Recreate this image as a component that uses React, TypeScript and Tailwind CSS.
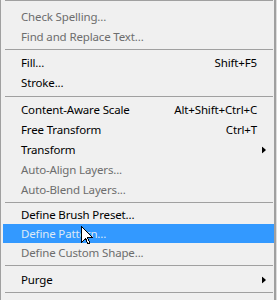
import React from "react"

type Item =
  | { kind: "sep"; h: number }
  | { kind: "item"; label: string; h: number; shortcut?: string; disabled?: boolean; submenu?: boolean; active?: boolean }

const items: Item[] = [
  { kind: "item", h: 20, label: "Check Spelling...", disabled: true },
  { kind: "item", h: 19, label: "Find and Replace Text...", disabled: true },
  { kind: "sep", h: 7 },
  { kind: "item", h: 20, label: "Fill...", shortcut: "Shift+F5" },
  { kind: "item", h: 20, label: "Stroke..." },
  { kind: "sep", h: 7 },
  { kind: "item", h: 20, label: "Content-Aware Scale", shortcut: "Alt+Shift+Ctrl+C" },
  { kind: "item", h: 20, label: "Free Transform", shortcut: "Ctrl+T" },
  { kind: "item", h: 20, label: "Transform", submenu: true },
  { kind: "item", h: 20, label: "Auto-Align Layers...", disabled: true },
  { kind: "item", h: 20, label: "Auto-Blend Layers...", disabled: true },
  { kind: "sep", h: 5 },
  { kind: "item", h: 19, label: "Define Brush Preset..." },
  { kind: "item", h: 19, label: "Define Pattern...", active: true },
  { kind: "item", h: 19, label: "Define Custom Shape...", disabled: true },
  { kind: "sep", h: 7 },
  { kind: "item", h: 22, label: "Purge", submenu: true },
  { kind: "sep", h: 3 },
]

const heights: Record<number, string> = {
  3: "h-[3px]",
  5: "h-[5px]",
  7: "h-[7px]",
  19: "h-[19px]",
  20: "h-[20px]",
  22: "h-[22px]",
}

function Separator({ h }: { h: number }) {
  return (
    <div className={heights[h] + " flex items-center pl-[4px] pr-[1px]"}>
      <div className="w-full border-t border-[#a0a0a0]" />
    </div>
  )
}

function Arrow() {
  return (
    <svg width="4" height="7" viewBox="0 0 4 7" className="absolute right-[8px] top-1/2 -translate-y-1/2">
      <path d="M0 0 L4 3.5 L0 7 Z" fill="#000" />
    </svg>
  )
}

function Cursor() {
  return (
    <svg
      width="12"
      height="19"
      viewBox="0 0 12 19"
      className="absolute left-[80px] top-[226px]"
      shapeRendering="crispEdges"
    >
      <path
        d="M0.5 0.5 L0.5 16.5 L4.5 12.5 L7 18 L9 17 L6.5 11.5 L11.5 11.5 Z"
        fill="#fff"
        stroke="#000"
        strokeWidth="1"
      />
    </svg>
  )
}

export default function App() {
  return (
    <div
      className="relative w-[277px] h-[300px] overflow-hidden bg-[#f0f0f0] border-l border-[#a0a0a0] text-[11.5px] tracking-[-0.15px] text-black"
      style={{ fontFamily: '"Noto Sans", "Open Sans", sans-serif' }}
    >
      <div className="absolute right-0 top-0 bottom-0 w-[3px] bg-[#a0a0a0] border-r border-[#dcdcdc]" />
      <div className="flex flex-col pr-[3px]">
        <div className="pl-[4px] pr-[1px]">
          <div className="border-t border-[#a0a0a0]" />
        </div>
        <div className="h-[6px]" />
        {items.map((it, i) =>
          it.kind === "sep" ? (
            <Separator key={i} h={it.h} />
          ) : (
            <div
              key={i}
              className={
                "relative flex items-center ml-[2px] pl-[18px] pr-[17px] " +
                heights[it.h] +
                " " +
                (it.active ? "bg-[#3399ff] text-[#dde9f6]" : it.disabled ? "text-[#6d6d6d]" : "text-black")
              }
            >
              <span className="flex-1 whitespace-nowrap">{it.label}</span>
              {it.shortcut && <span className="whitespace-nowrap">{it.shortcut}</span>}
              {it.submenu && <Arrow />}
            </div>
          )
        )}
      </div>
      <Cursor />
    </div>
  )
}
